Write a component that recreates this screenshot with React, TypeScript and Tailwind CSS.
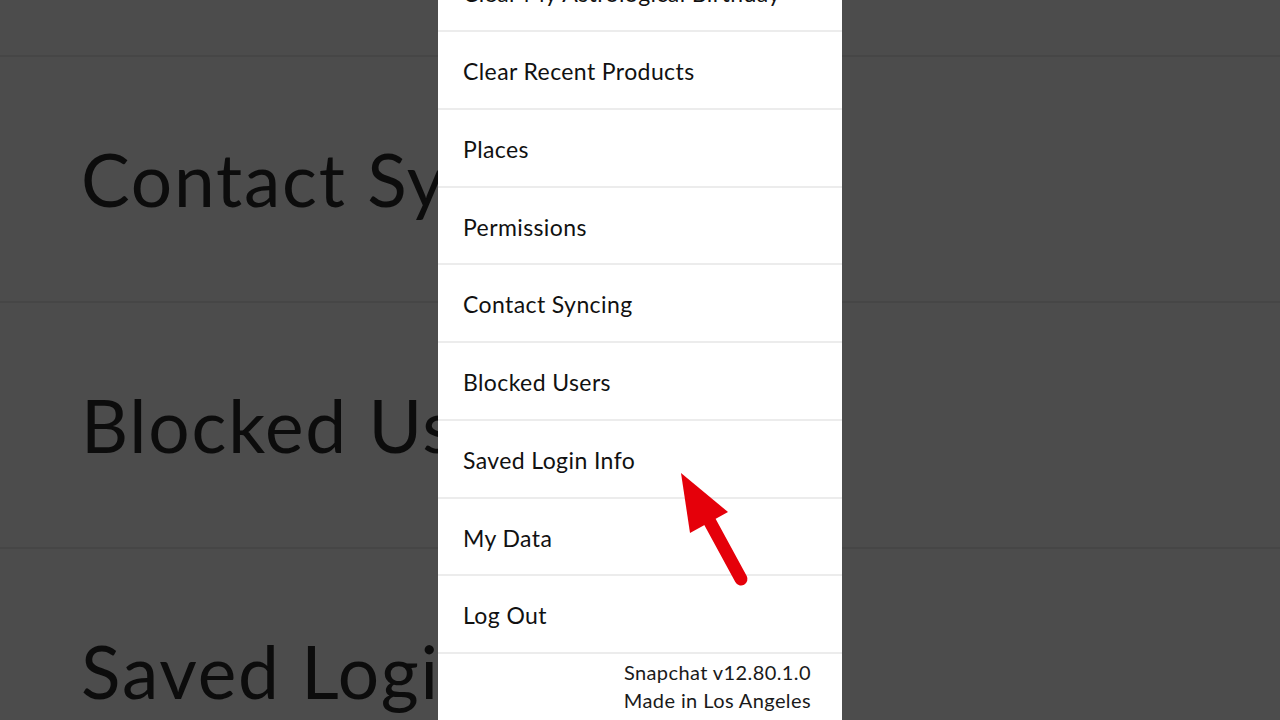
const items = [
  'Clear My Astrological Birthday',
  'Clear Recent Products',
  'Places',
  'Permissions',
  'Contact Syncing',
  'Blocked Users',
  'Saved Login Info',
  'My Data',
  'Log Out',
];

const bgRows = ['Contact Syncing', 'Blocked Users', 'Saved Login Info'];

function Backdrop({ withText }: { withText: boolean }) {
  return (
    <div className="flex flex-col">
      <div className="h-[57px] shrink-0 border-b-2 border-[#464646]" />
      {bgRows.map((label) => (
        <div
          key={label}
          className="h-[246px] shrink-0 flex items-center border-b-2 border-[#464646] pl-[81px] whitespace-nowrap"
        >
          {withText && (
            <span className="text-[73px] tracking-[1.8px] text-[#0c0c0c] leading-none">{label}</span>
          )}
        </div>
      ))}
    </div>
  );
}

function ArrowMark() {
  return (
    <svg
      className="absolute left-[670px] top-[462px]"
      width="90"
      height="130"
      viewBox="0 0 90 130"
    >
      <line x1="40" y1="60" x2="71" y2="117" stroke="#e5000a" strokeWidth="13" strokeLinecap="round" />
      <polygon points="11,11 58,50 20,71" fill="#e5000a" />
    </svg>
  );
}

export default function App() {
  return (
    <div
      className="relative h-[720px] w-[1280px] overflow-hidden bg-[#4c4c4c] flex"
      style={{ fontFamily: 'Lato, "Noto Sans", sans-serif' }}
    >
      <div className="w-[438px] shrink-0 overflow-hidden">
        <Backdrop withText />
      </div>

      <div className="w-[404px] shrink-0 bg-white flex flex-col">
        <div className="mt-[-45.75px] flex flex-col">
          {items.map((label) => (
            <div
              key={label}
              className="h-[77.75px] shrink-0 flex items-center border-b-2 border-[#ececec] pl-[25px] pt-[3px]"
            >
              <span className="text-[23px] tracking-[0.4px] text-[#111111]">{label}</span>
            </div>
          ))}
        </div>
        <div className="flex justify-end pr-[31px] pt-[4px]">
          <div className="text-center text-[20px] tracking-[0.4px] leading-[28px] text-[#1a1a1a]">
            <p>Snapchat v12.80.1.0</p>
            <p>Made in Los Angeles</p>
          </div>
        </div>
      </div>

      <div className="flex-1 overflow-hidden">
        <Backdrop withText={false} />
      </div>

      <ArrowMark />
    </div>
  );
}
